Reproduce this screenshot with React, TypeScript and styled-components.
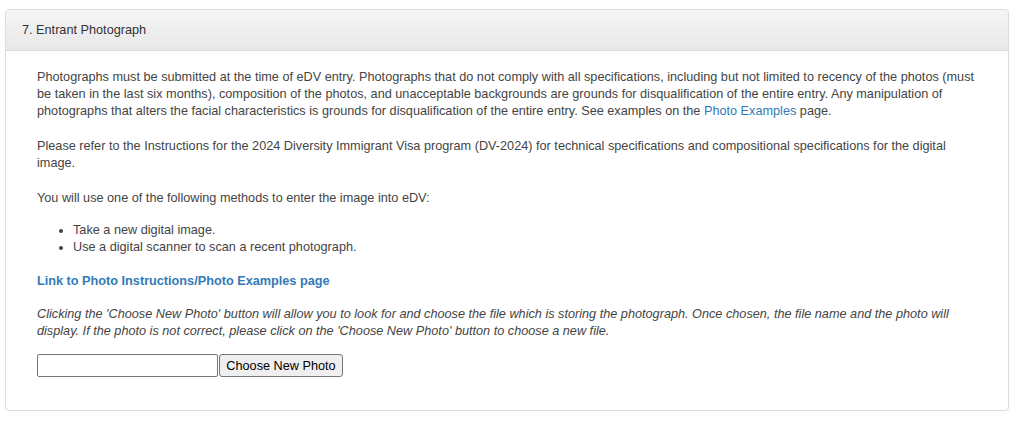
import React from 'react';
import styled, { createGlobalStyle } from 'styled-components';

const GlobalStyle = createGlobalStyle`
    html, body {
        margin: 0;
        padding: 0;
        background: #fff;
    }
    body {
        font-family: "Liberation Sans", Arial, sans-serif;
        font-size: 12.7px;
        line-height: 17px;
        color: #444;
    }
`;

export default function App() {
    return (
        <>
            <GlobalStyle />
            <Page>
                <Panel>
                    <PanelHeading>7. Entrant Photograph</PanelHeading>
                    <PanelBody>
                        <Paragraph $gap={18}>
                            Photographs must be submitted at the time of eDV entry. Photographs that do not
                            comply with all specifications, including but not limited to recency of the photos
                            (must be taken in the last six months), composition of the photos, and unacceptable
                            backgrounds are grounds for disqualification of the entire entry. Any manipulation
                            of photographs that alters the facial characteristics is grounds for disqualification
                            of the entire entry. See examples on the <Link href="#">Photo Examples</Link> page.
                        </Paragraph>
                        <Paragraph $gap={18}>
                            Please refer to the Instructions for the 2024 Diversity Immigrant Visa program
                            (DV-2024) for technical specifications and compositional specifications for the
                            digital image.
                        </Paragraph>
                        <Paragraph $gap={15}>
                            You will use one of the following methods to enter the image into eDV:
                        </Paragraph>
                        <MethodList>
                            <li>Take a new digital image.</li>
                            <li>Use a digital scanner to scan a recent photograph.</li>
                        </MethodList>
                        <Paragraph $gap={16}>
                            <StrongLink href="#">Link to Photo Instructions/Photo Examples page</StrongLink>
                        </Paragraph>
                        <Note>
                            Clicking the 'Choose New Photo' button will allow you to look for and choose the file
                            which is storing the photograph. Once chosen, the file name and the photo will
                            display. If the photo is not correct, please click on the 'Choose New Photo' button
                            to choose a new file.
                        </Note>
                        <FileRow>
                            <FileName type="text" readOnly />
                            <ChooseButton type="button">Choose New Photo</ChooseButton>
                        </FileRow>
                    </PanelBody>
                </Panel>
            </Page>
        </>
    );
}

const Page = styled.div`
    padding: 9px 0 0 5px;
`;

const Panel = styled.div`
    width: 1002px;
    border: 1px solid #ddd;
    border-radius: 4px;
    background: #fff;
    box-shadow: 0 1px 2px rgba(0, 0, 0, 0.05);
`;

const PanelHeading = styled.div`
    padding: 10px 16px;
    line-height: 20px;
    color: #333;
    border-bottom: 1px solid #ddd;
    border-radius: 3px 3px 0 0;
    background-image: linear-gradient(to bottom, #f5f5f5 0%, #e8e8e8 100%);
`;

const PanelBody = styled.div`
    padding: 18px 31px 33px;
`;

const Paragraph = styled.p<{ $gap: number }>`
    margin: 0 0 ${(p) => p.$gap}px;
`;

const Link = styled.a`
    color: #337ab7;
    text-decoration: none;
`;

const StrongLink = styled(Link)`
    font-weight: bold;
`;

const MethodList = styled.ul`
    margin: 0 0 17px;
    padding-left: 36px;
`;

const Note = styled.p`
    margin: 0 0 14px;
    font-style: italic;
`;

const FileRow = styled.div`
    display: flex;
    align-items: stretch;
    height: 23px;
`;

const FileName = styled.input`
    box-sizing: border-box;
    width: 181px;
    height: 23px;
    margin: 0;
    padding: 1px 2px;
    border: 1px solid #767676;
    border-radius: 2px;
    font-family: "Liberation Sans", Arial, sans-serif;
    font-size: 13px;
    background: #fff;
`;

const ChooseButton = styled.button`
    box-sizing: border-box;
    width: 124px;
    height: 23px;
    margin: 0 0 0 1px;
    padding: 1px 6px;
    border: 1px solid #767676;
    border-radius: 3px;
    background: #efefef;
    color: #000;
    font-family: "Liberation Sans", Arial, sans-serif;
    font-size: 12.7px;
    line-height: 18px;
`;
